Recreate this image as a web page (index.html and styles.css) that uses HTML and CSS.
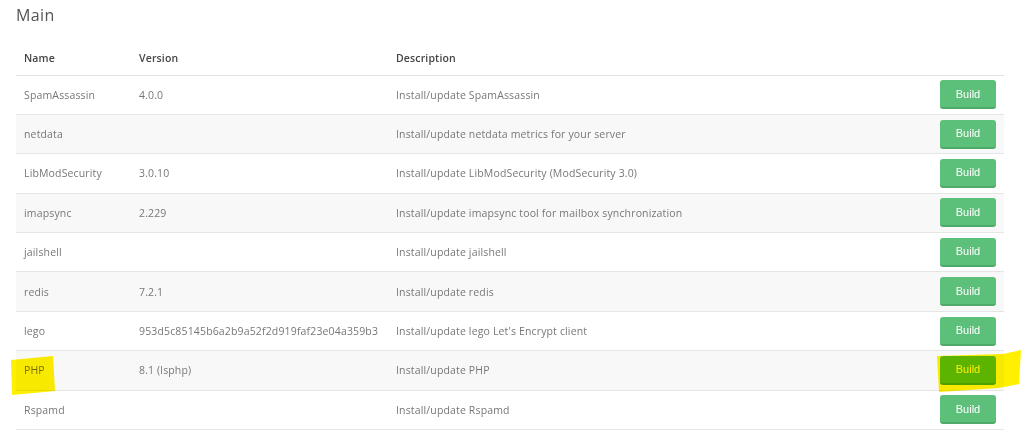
FILE: index.html
```html
<!DOCTYPE html>
<html>
<head>
<meta charset="utf-8">
<link rel="stylesheet" href="styles.css">
</head>
<body>
<div class="page">
  <h2 class="title">Main</h2>
  <div class="table-wrap">
    <table class="builds">
      <thead>
        <tr><th class="c-name">Name</th><th class="c-ver">Version</th><th class="c-desc">Description</th><th class="c-act"></th></tr>
      </thead>
      <tbody>
        <tr><td>SpamAssassin</td><td>4.0.0</td><td>Install/update SpamAssassin</td><td class="c-act"><button class="btn">Build</button></td></tr>
        <tr><td>netdata</td><td></td><td>Install/update netdata metrics for your server</td><td class="c-act"><button class="btn">Build</button></td></tr>
        <tr><td>LibModSecurity</td><td>3.0.10</td><td>Install/update LibModSecurity (ModSecurity 3.0)</td><td class="c-act"><button class="btn">Build</button></td></tr>
        <tr><td>imapsync</td><td>2.229</td><td>Install/update imapsync tool for mailbox synchronization</td><td class="c-act"><button class="btn">Build</button></td></tr>
        <tr><td>jailshell</td><td></td><td>Install/update jailshell</td><td class="c-act"><button class="btn">Build</button></td></tr>
        <tr><td>redis</td><td>7.2.1</td><td>Install/update redis</td><td class="c-act"><button class="btn">Build</button></td></tr>
        <tr><td>lego</td><td>953d5c85145b6a2b9a52f2d919faf23e04a359b3</td><td>Install/update lego Let's Encrypt client</td><td class="c-act"><button class="btn">Build</button></td></tr>
        <tr><td>PHP</td><td>8.1 (lsphp)</td><td>Install/update PHP</td><td class="c-act"><button class="btn">Build</button></td></tr>
        <tr><td>Rspamd</td><td></td><td>Install/update Rspamd</td><td class="c-act"><button class="btn">Build</button></td></tr>
      </tbody>
    </table>
    <svg class="hl hl-name" width="50" height="40" viewBox="0 0 50 40"><polygon points="2,5 44,1 46,36 3,40" fill="#fff000"/></svg>
    <svg class="hl hl-btn" width="90" height="44" viewBox="0 0 90 44"><polygon points="4,6 70,4 88,0 86,34 66,38 6,42" fill="#fff000"/></svg>
  </div>
</div>
</body>
</html>
```
FILE: styles.css
```css
* { box-sizing: border-box; }
html, body { margin: 0; padding: 0; background: #fff; }
body { font-family: "Open Sans", "DejaVu Sans", sans-serif; color: #777; }
.page { padding: 0 20px 0 16px; width: 1024px; }
.title {
  margin: 0;
  padding-top: 4px;
  height: 38px;
  font-size: 16px;
  font-weight: 400;
  color: #555;
  letter-spacing: 0.4px;
}
.table-wrap { position: relative; }
.builds {
  width: 988px;
  border-collapse: collapse;
  font-size: 10.5px;
  letter-spacing: 0.15px;
}
.builds th {
  text-align: left;
  font-weight: 600;
  color: #444;
  height: 37px;
  padding: 3px 8px 0;
  border-bottom: 1px solid #e2e2e2;
  vertical-align: middle;
}
.builds td {
  height: 39.4px;
  padding: 0 8px;
  border-bottom: 1px solid #e6e6e6;
  vertical-align: middle;
  white-space: nowrap;
}
.builds tbody tr:nth-child(even) td { background: #f8f8f9; }
.c-name { width: 115px; }
.c-ver { width: 257px; }
.c-act { text-align: right; width: 80px; }
.builds td.c-act { padding-right: 8px; }
.btn {
  width: 56px;
  height: 29px;
  border: none;
  border-radius: 3px;
  background: #5cbf7a;
  border-bottom: 2px solid #4ea96a;
  color: #fff;
  font-family: "Liberation Sans", Arial, sans-serif;
  font-size: 11px;
  letter-spacing: 0;
  cursor: pointer;
}
.hl {
  position: absolute;
  mix-blend-mode: multiply;
}
.hl-name { left: -7px; top: 317px; }
.hl-btn { left: 917px; top: 312px; }
```
